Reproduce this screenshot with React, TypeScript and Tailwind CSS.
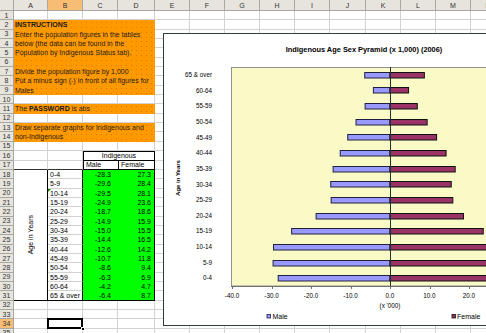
import React from "react";

const COLS = ["A", "B", "C", "D", "E", "F", "G", "H", "I", "J", "K", "L", "M", "N"];

const DATA: [string, number, number][] = [
  ["0-4", -28.3, 27.3],
  ["5-9", -29.6, 28.4],
  ["10-14", -29.5, 28.1],
  ["15-19", -24.9, 23.6],
  ["20-24", -18.7, 18.6],
  ["25-29", -14.9, 15.9],
  ["30-34", -15.0, 15.5],
  ["35-39", -14.4, 16.5],
  ["40-44", -12.6, 14.2],
  ["45-49", -10.7, 11.8],
  ["50-54", -8.6, 9.4],
  ["55-59", -6.3, 6.9],
  ["60-64", -4.2, 4.7],
  ["65 & over", -6.4, 8.7],
];

const ORANGE: Record<number, React.ReactNode> = {
  2: <b>INSTRUCTIONS</b>,
  3: "Enter the population figures in the tables",
  4: "below (the data can be found in the",
  5: "Population by Indigenous Status tab).",
  6: "",
  7: "Divide the population figure by 1,000",
  8: "Put a minus sign (-) in front of all figures for",
  9: "Males",
  11: (
    <>
      The <b>PASSWORD</b> is abs
    </>
  ),
  13: "Draw separate graphs for Indigenous and",
  14: "non-Indigenous",
};

const gl = "border-r border-b border-[#d2d2d2]";
const hdr =
  "bg-[#e6e4dc] border-r border-b border-[#a8a8a0] text-[7px] text-[#333] flex items-center justify-center leading-none";
const hdrSel =
  "bg-[#f7bd74] border-r border-b border-[#a8a8a0] text-[7px] text-[#333] flex items-center justify-center leading-none";

function Chart() {
  const x0 = 390;
  const k = 3.95;
  const top = 67;
  const bottom = 286;
  const step = (bottom - top) / 14;
  const cats = [...DATA].reverse();
  const xv = (v: number) => x0 + v * k;
  const font = "Liberation Sans, Arial, sans-serif";
  const ticks = [-40, -30, -20, -10, 0, 10, 20, 30, 40];
  return (
    <div className="absolute left-[163px] top-[33px] w-[330px] h-[300px]">
      <svg width={330} height={300} viewBox="163 33 330 300" className="block">
        <rect x={163.5} y={33.5} width={400} height={292} fill="#ffffff" stroke="#2f3f3f" />
        <text x={364} y={52} fontFamily={font} fontSize={7.4} fontWeight="bold" textAnchor="middle" fill="#000">
          Indigenous Age Sex Pyramid (x 1,000) (2006)
        </text>
        <rect x={231.5} y={67.5} width={316} height={218.5} fill="#fafac6" stroke="#909090" />
        {cats.map((c, i) => {
          const cy = top + (i + 0.5) * step;
          const y = Math.round(cy - 3) + 0.5;
          return (
            <g key={c[0]}>
              <rect x={xv(c[1])} y={y} width={x0 - xv(c[1])} height={5.5} fill="#9999ff" stroke="#202040" strokeWidth={1} />
              <rect x={x0} y={y} width={xv(c[2]) - x0} height={5.5} fill="#993366" stroke="#101010" strokeWidth={1} />
              <text x={212} y={cy + 2.2} fontFamily={font} fontSize={6.3} textAnchor="end" fill="#000">
                {c[0]}
              </text>
            </g>
          );
        })}
        <line x1={390.5} y1={67} x2={390.5} y2={286} stroke="#1c3434" strokeWidth={1} />
        <line x1={231} y1={286.5} x2={548} y2={286.5} stroke="#707070" strokeWidth={1} />
        {ticks.map((t) => (
          <g key={t}>
            <line x1={Math.round(xv(t)) + 0.5} y1={286} x2={Math.round(xv(t)) + 0.5} y2={289} stroke="#707070" />
            <text x={xv(t)} y={297.5} fontFamily={font} fontSize={6.3} textAnchor="middle" fill="#000">
              {t.toFixed(1)}
            </text>
          </g>
        ))}
        <text x={390} y={308} fontFamily={font} fontSize={6.3} textAnchor="middle" fill="#000">
          (x '000)
        </text>
        <text
          x={0}
          y={0}
          transform="translate(179.5 178) rotate(-90)"
          fontFamily={font}
          fontSize={6}
          fontWeight="bold"
          textAnchor="middle"
          fill="#000"
        >
          Age in Years
        </text>
        <rect x={267} y={314.5} width={3.5} height={3.5} fill="#9999ff" stroke="#202040" strokeWidth={0.8} />
        <text x={272.5} y={319} fontFamily={font} fontSize={7} fill="#000">
          Male
        </text>
        <rect x={452} y={314.5} width={3.5} height={3.5} fill="#993366" stroke="#101010" strokeWidth={0.8} />
        <text x={457} y={319} fontFamily={font} fontSize={7} fill="#000">
          Female
        </text>
      </svg>
    </div>
  );
}

export default function App() {
  const cells: React.ReactNode[] = [];
  cells.push(<div key="corner" className={hdr} />);
  COLS.forEach((c) =>
    cells.push(
      <div key={"h" + c} className={c === "B" ? hdrSel : hdr}>
        {c}
      </div>
    )
  );
  for (let r = 1; r <= 36; r++) {
    cells.push(
      <div key={"r" + r} className={r === 34 ? hdrSel : hdr}>
        {r}
      </div>
    );
    const rest = (from: number) => COLS.slice(from).map((c) => <div key={c + r} className={gl} />);
    if (ORANGE[r] !== undefined) {
      cells.push(
        <div
          key={"o" + r}
          className="col-span-4 bg-[#ff9900] bg-[radial-gradient(circle,#d97a00_0.6px,transparent_0.8px)] bg-[length:5px_5px] text-[7px] leading-[9.35px] text-[#1a1a1a] pl-[1px] whitespace-nowrap overflow-hidden"
        >
          {ORANGE[r]}
        </div>
      );
      cells.push(...rest(4));
    } else if (r === 16) {
      cells.push(<div key={"A" + r} className={gl} />);
      cells.push(<div key={"B" + r} className={gl} />);
      cells.push(
        <div
          key={"CD" + r}
          className="col-span-2 border border-black text-[7px] leading-[8px] text-center text-black"
        >
          Indigenous
        </div>
      );
      cells.push(...rest(4));
    } else if (r === 17) {
      cells.push(<div key={"A" + r} className="border-r border-[#d2d2d2] border-b border-b-[#333]" />);
      cells.push(<div key={"B" + r} className="border-r border-[#d2d2d2] border-b border-b-[#333]" />);
      cells.push(
        <div key={"C" + r} className="border-l border-b border-black text-[7px] leading-[8.5px] pl-[2px] text-black">
          Male
        </div>
      );
      cells.push(
        <div key={"D" + r} className="border-l border-r border-b border-black text-[7px] leading-[8.5px] pl-[2px] text-black">
          Female
        </div>
      );
      cells.push(...rest(4));
    } else if (r >= 18 && r <= 31) {
      const d = DATA[r - 18];
      const last = r === 31;
      if (r === 18) {
        cells.push(
          <div key="Amerge" className="row-span-14 border-r border-b border-black flex items-center justify-center">
            <span className="[writing-mode:vertical-rl] rotate-180 text-[7px] text-black leading-none">Age in Years</span>
          </div>
        );
      }
      cells.push(
        <div
          key={"B" + r}
          className={
            last
              ? "relative border-r border-r-black border-b border-b-black text-[7px] leading-[9px] pl-[2px] text-black whitespace-nowrap"
              : "relative border-r border-r-black border-b border-b-[#d2d2d2] text-[7px] leading-[9px] pl-[2px] text-black whitespace-nowrap"
          }
        >
          {r === 20 && (
            <span className="absolute left-0 top-0 w-0 h-0 border-t-[3px] border-r-[3px] border-t-[#0a8a0a] border-r-transparent" />
          )}
          {d[0]}
        </div>
      );
      cells.push(
        <div
          key={"C" + r}
          className={
            last
              ? "bg-[#00ff00] border-b border-black text-[7px] leading-[9px] text-right pr-[7px] text-black"
              : "bg-[#00ff00] text-[7px] leading-[9.35px] text-right pr-[7px] text-black"
          }
        >
          {d[1].toFixed(1)}
        </div>
      );
      cells.push(
        <div
          key={"D" + r}
          className={
            last
              ? "bg-[#00ff00] border-r border-b border-black text-[7px] leading-[9px] text-right pr-[3px] text-black"
              : "bg-[#00ff00] border-r border-black text-[7px] leading-[9.35px] text-right pr-[3px] text-black"
          }
        >
          {d[2].toFixed(1)}
        </div>
      );
      cells.push(...rest(4));
    } else if (r === 34) {
      cells.push(<div key={"A" + r} className={gl} />);
      cells.push(
        <div key={"B" + r} className={"relative " + gl}>
          <div className="absolute -left-[1px] -top-[1px] right-[-1px] bottom-[-1px] border-2 border-black" />
          <div className="absolute right-[-3px] bottom-[-3px] w-[4px] h-[4px] bg-black border border-white" />
        </div>
      );
      cells.push(...rest(2));
    } else {
      cells.push(...rest(0));
    }
  }

  return (
    <div className="relative w-[486px] h-[333px] overflow-hidden bg-white font-[Liberation_Sans,Arial,sans-serif]">
      <div className="grid grid-cols-[14px_34px_35px_35px_37px_35px_35px_35px_35px_35px_36px_35px_35px_35px_35px] grid-rows-[11px_repeat(36,9.35px)]">
        {cells}
      </div>
      <Chart />
    </div>
  );
}
